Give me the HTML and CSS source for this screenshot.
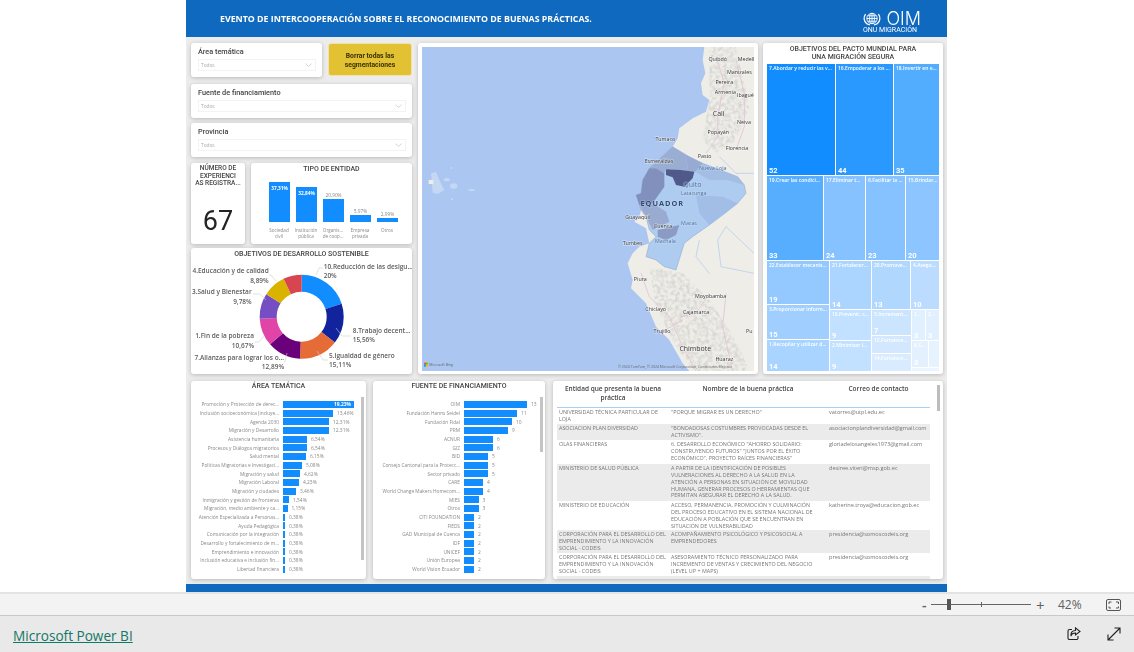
FILE: index.html
```
<!DOCTYPE html>
<html lang="es">
<head>
<meta charset="utf-8">
<title>Evento de intercooperación</title>
<link rel="stylesheet" href="styles.css">
</head>
<body>
<main class="stage">
<section class="report">
  <header class="banner">
    <h1 class="banner-title">EVENTO DE INTERCOOPERACIÓN SOBRE EL RECONOCIMIENTO DE BUENAS PRÁCTICAS.</h1>
    <div class="logo">
      <div class="logo-top">
        <svg class="globe" viewBox="0 0 18 15" fill="none" stroke="#fff" stroke-width=".9">
          <circle cx="9" cy="7.5" r="5.2"/><ellipse cx="9" cy="7.5" rx="2.4" ry="5.2"/><path d="M3.8 7.5h10.4M4.6 4.8h8.8M4.6 10.2h8.8M9 2.3v10.4"/>
          <path stroke-width="1.3" d="M2.6 3.2C.4 6 .6 10 3.6 12.6L7 14M15.400 3.200C17.600 6 17.400 10 14.400 12.600L11 14"/>
        </svg>
        <span class="logo-oim">OIM</span>
      </div>
      <span class="logo-sub">ONU MIGRACIÓN</span>
    </div>
  </header>
  <div class="canvas">
    <div class="top-row">
      <div class="left-col">
        <div class="row-pair">
          <div class="card slicer slicer-short">
            <div class="slicer-title">Área temática</div>
            <div class="dropdown"><span>Todos</span><svg class="chev" viewBox="0 0 8 4"><path d="M.5.500 4 3.500 7.500.500" fill="none" stroke="#bbb" stroke-width=".7"/></svg></div>
          </div>
          <button class="clear-btn">Borrar todas las segmentaciones</button>
        </div>
        <div class="card slicer gap7">
          <div class="slicer-title">Fuente de financiamiento</div>
          <div class="dropdown"><span>Todos</span><svg class="chev" viewBox="0 0 8 4"><path d="M.5.500 4 3.500 7.500.500" fill="none" stroke="#bbb" stroke-width=".7"/></svg></div>
        </div>
        <div class="card slicer gap5">
          <div class="slicer-title">Provincia</div>
          <div class="dropdown"><span>Todos</span><svg class="chev" viewBox="0 0 8 4"><path d="M.5.500 4 3.500 7.500.500" fill="none" stroke="#bbb" stroke-width=".7"/></svg></div>
        </div>
        <div class="row-kpi">
          <div class="card kpi">
            <div class="kpi-title"><span>NÚMERO DE</span><span>EXPERIENCI</span><span>AS REGISTRA...</span></div>
            <div class="kpi-value">67</div>
          </div>
          <div class="card tipo">
            <div class="vis-title">TIPO DE ENTIDAD</div>
            <div class="tipo-bars">
              <div class="tipo-col"><div class="tipo-bar" style="height:40px"><span>37,31%</span></div></div>
              <div class="tipo-col"><div class="tipo-bar" style="height:35px"><span>32,84%</span></div></div>
              <div class="tipo-col"><em>20,90%</em><div class="tipo-bar" style="height:23px"></div></div>
              <div class="tipo-col"><em>5,97%</em><div class="tipo-bar" style="height:7px"></div></div>
              <div class="tipo-col"><em>2,99%</em><div class="tipo-bar" style="height:4px"></div></div>
            </div>
            <div class="tipo-labels">
              <span>Sociedad civil</span><span>Institución pública</span><span>Organis... de coop...</span><span>Empresa privada</span><span>Otros</span>
            </div>
          </div>
        </div>
        <div class="card ods">
          <div class="vis-title">OBJETIVOS DE DESARROLLO SOSTENIBLE</div>
          <svg class="donut" viewBox="0 0 221 126">
            <g fill="none" stroke-width="17" transform="rotate(-90 110.700 68.700)">
              <circle cx="110.700" cy="68.700" r="33.500" pathLength="100" stroke="#118dff" stroke-dasharray="20 80"/>
              <circle cx="110.700" cy="68.700" r="33.500" pathLength="100" stroke="#12239e" stroke-dasharray="15.560 84.440" stroke-dashoffset="-20"/>
              <circle cx="110.700" cy="68.700" r="33.500" pathLength="100" stroke="#e66c37" stroke-dasharray="15.110 84.890" stroke-dashoffset="-35.560"/>
              <circle cx="110.700" cy="68.700" r="33.500" pathLength="100" stroke="#6b007b" stroke-dasharray="12.890 87.110" stroke-dashoffset="-50.670"/>
              <circle cx="110.700" cy="68.700" r="33.500" pathLength="100" stroke="#e044a7" stroke-dasharray="10.670 89.330" stroke-dashoffset="-63.560"/>
              <circle cx="110.700" cy="68.700" r="33.500" pathLength="100" stroke="#744ec2" stroke-dasharray="9.780 90.220" stroke-dashoffset="-74.230"/>
              <circle cx="110.700" cy="68.700" r="33.500" pathLength="100" stroke="#d9b300" stroke-dasharray="8.890 91.110" stroke-dashoffset="-84.010"/>
              <circle cx="110.700" cy="68.700" r="33.500" pathLength="100" stroke="#d64550" stroke-dasharray="7.100 92.900" stroke-dashoffset="-92.900"/>
            </g>
            <g fill="none" stroke="#ccc" stroke-width=".6">
              <path d="M125 27 l3-7h4M145 80l6 8h9M126 103l6 9h5M96 105l-2 9h-1M73 88l-5 6h-4M75 52l-6-6h-7M85 33l-5-6h-2"/>
            </g>
            <g class="donut-label">
              <text x="132.700" y="20.500">10.Reducción de las desigu...</text><text x="132.700" y="29.500">20%</text>
              <text x="161.700" y="85">8.Trabajo decent...</text><text x="161.700" y="94">15,56%</text>
              <text x="138" y="110">5.Igualdad de género</text><text x="138" y="119">15,11%</text>
            </g>
            <g class="donut-label end">
              <text x="93" y="112">7.Allanzas para lograr los o...</text><text x="93" y="121">12,89%</text>
              <text x="63" y="90">1.Fin de la pobreza</text><text x="63" y="100">10,67%</text>
              <text x="60.700" y="46">3.Salud y Bienestar</text><text x="60.700" y="56">9,78%</text>
              <text x="77.700" y="25">4.Educación y de calidad</text><text x="77.700" y="35">8,89%</text>
            </g>
          </svg>
        </div>
      </div>

      <div class="card map-card">
        <svg class="map" viewBox="18 21 996 972">
          <defs>
            <filter id="terrain" x="0" y="0" width="100%" height="100%">
              <feTurbulence type="fractalNoise" baseFrequency=".09" numOctaves="3" seed="4"/>
              <feColorMatrix values="0 0 0 0 .68  0 0 0 0 .68  0 0 0 0 .65  2.600 0 0 0 -.95"/>
              <feComposite in2="SourceAlpha" operator="in"/>
            </filter>
          </defs>
          <rect x="18" y="21" width="996" height="972" fill="#abc6f0"/>
          <path fill="#eeede8" d="M865 21 860 60 868 100 855 130 860 165 880 180 870 215 830 235 790 265 785 295 770 320 700 385 680 420 675 460 660 465 675 510 670 530 655 545 690 565 700 610 670 620 650 640 635 670 650 720 645 745 690 790 720 860 760 900 800 970 820 993H1014V21Z"/>
          <g filter="url(#terrain)">
            <path d="M880 21H960L1000 200 960 300 900 340 860 300 880 180Z"/>
            <path d="M700 680 800 700 880 780 960 900 1000 993H830L770 900 720 800Z"/>
          </g>
          <path fill="none" stroke="#e3c2d6" stroke-width="2.500" d="M900 50 925 130 905 230 905 290 870 340M960 60 985 160 985 260 960 330M675 700 700 770 760 830 800 920 840 993M880 760 840 820 790 830M730 880 800 840M930 760 920 860 950 993"/>
          <path fill="none" stroke="#a9c9ee" stroke-width="2" d="M1014 400 960 400 910 350M1014 640 930 560 905 600 915 680 1014 700M850 600 840 650 880 700"/>
          <g fill="#c4d8f4">
            <path d="M45 400 60 395 70 420 85 450 65 462 50 458 48 435Z"/>
            <ellipse cx="113" cy="438" rx="11" ry="8"/><ellipse cx="92" cy="419" rx="9" ry="5"/><ellipse cx="167" cy="450" rx="10" ry="3"/>
            <circle cx="106" cy="384" r="3"/><circle cx="108" cy="477" r="3"/><rect x="38" y="420" width="14" height="12" fill="#eeede8"/>
          </g>
          <path fill="#aecbf0" stroke="#6d8ab5" stroke-width="1" d="M770 320 820 350 860 370 900 385 965 410 985 435 990 460 965 490 920 525 880 555 830 590 805 610 780 690 745 680 720 660 690 650 700 610 720 590 700 570 690 530 675 510 660 465 675 460 680 420 700 385Z"/>
          <path fill="#9aaed4" d="M770 320 810 345 815 385 795 390 750 388 745 400 720 385 700 385Z"/>
          <path fill="#97abd2" d="M810 345 860 370 838 395 795 390 815 385Z"/>
          <path fill="#a3bde4" d="M860 370 900 385 965 410 985 435 935 420 880 420 838 395Z"/>
          <path fill="#8290bd" d="M680 420 700 385 720 385 745 400 745 440 710 490 670 495 660 465 675 460Z"/>
          <path fill="#9aabd2" d="M670 495 710 490 750 515 760 545 710 570 690 530Z"/>
          <path fill="#8b9bc3" d="M725 570 790 555 780 585 750 600 725 590Z"/>
          <path fill="#a3bee6" d="M840 465 920 470 965 490 920 525 880 555 850 520Z"/>
          <path fill="#4f5a8a" d="M750 388 795 390 835 395 830 415 805 440 780 435 770 412 750 405Z"/>
          <g class="map-text">
            <text x="905" y="64">Quibdó</text><text x="990" y="64">Medell</text><text x="970" y="102">Manizales</text><text x="925" y="131">Pereira</text><text x="928" y="161">Armenia</text><text x="988" y="172">Ibagué</text>
            <text class="big" x="908" y="227">Cali</text><text x="984" y="253">Neiva</text><text x="907" y="282">Popayán</text><text x="748" y="304">Tumaco</text><text x="963" y="330">Florencia</text><text x="866" y="353">Pasto</text>
            <text x="729" y="368">Esmeraldas</text><text class="blue" x="890" y="390">Nueva Loja</text><text class="blue big" x="829" y="441">Quito</text><text class="blue" x="833" y="464">Latacunga</text>
            <text class="country" x="739" y="499">EQUADOR</text><text x="665" y="537">Guayaquil</text><text x="741" y="563">Cuenca</text><text class="blue" x="819" y="555">Macas</text><text class="blue" x="748" y="610">Machala</text><text x="650" y="614">Tumbes</text>
            <text x="673" y="722">Piura</text><text x="884" y="773">Moyobamba</text><text x="719" y="813">Chiclayo</text><text x="840" y="823">Cajamarca</text><text x="738" y="878">Trujillo</text><text class="big" x="838" y="934">Chimbote</text><text x="925" y="962">Huaraz</text><text x="1000" y="878">Pu</text>
          </g>
          <rect x="24" y="968" width="6" height="6" fill="#f25022"/><rect x="30" y="968" width="6" height="6" fill="#7fba00"/><rect x="24" y="974" width="6" height="6" fill="#00a4ef"/><rect x="30" y="974" width="6" height="6" fill="#ffb900"/>
          <text class="map-fine" x="40" y="979">Microsoft Bing</text>
          <text class="map-fine" x="606" y="983">© 2024 TomTom, © 2024 Microsoft Corporation, Condiciones  Mejoras</text>
        </svg>
      </div>

      <div class="card treemap-card">
        <div class="vis-title tm-title">OBJETIVOS DEL PACTO MUNDIAL PARA UNA MIGRACIÓN SEGURA</div>
        <div class="tm">
          <div class="tm-row" style="height:111px">
            <div class="tm-cell" style="width:68px;background:#118dff"><span>7.Abordar y reducir las v...</span><b>52</b></div>
            <div class="tm-cell" style="width:57px;background:#2a99ff"><span>16.Empoderar a los ...</span><b>44</b></div>
            <div class="tm-cell" style="width:45px;background:#53adff"><span>18.Invertir en e...</span><b>35</b></div>
          </div>
          <div class="tm-row" style="height:84px">
            <div class="tm-cell" style="width:56px;background:#57aeff"><span>19.Crear las condici...</span><b>33</b></div>
            <div class="tm-cell" style="width:41px;background:#85c2ff"><span>17.Eliminar t...</span><b>24</b></div>
            <div class="tm-cell" style="width:39px;background:#85c2ff"><span>6.Facilitar la ...</span><b>23</b></div>
            <div class="tm-cell" style="width:33px;background:#8cc5ff"><span>15.Brindar...</span><b>20</b></div>
          </div>
          <div class="tm-row" style="height:110px">
            <div class="tm-col" style="width:62px">
              <div class="tm-cell" style="height:43px;background:#93c9ff"><span>22.Establecer mecanis...</span><b>19</b></div>
              <div class="tm-cell" style="height:34px;background:#a0cfff"><span>3.Proporcionar inform...</span><b>15</b></div>
              <div class="tm-cell" style="height:31px;background:#a8d4ff"><span>1.Recopilar y utilizar d...</span><b>14</b></div>
            </div>
            <div class="tm-col" style="width:109px">
              <div class="tm-row" style="height:48px">
                <div class="tm-cell" style="width:41px;background:#abd5ff"><span>21.Fortalecer...</span><b>14</b></div>
                <div class="tm-cell" style="width:38px;background:#b0d8ff"><span>20.Promove...</span><b>13</b></div>
                <div class="tm-cell" style="width:28px;background:#bcdcff"><span>4.Asegu...</span><b>10</b></div>
              </div>
              <div class="tm-row" style="height:61px">
                <div class="tm-col" style="width:41px">
                  <div class="tm-cell" style="height:30px;background:#c2e0ff"><span>10.Prevenir, c...</span><b>9</b></div>
                  <div class="tm-cell" style="height:30px;background:#c2e0ff"><span>2.Minimizar l...</span><b>9</b></div>
                </div>
                <div class="tm-col" style="width:39px">
                  <div class="tm-cell" style="height:25px;background:#cce5ff"><span>5.Increment...</span><b>7</b></div>
                  <div class="tm-cell" style="height:17px;background:#d3e8ff"><span>12.Fortalece...</span></div>
                  <div class="tm-cell" style="height:17px;background:#d8ebff"><span>14.Fortalece...</span></div>
                </div>
                <div class="tm-col" style="width:27px">
                  <div class="tm-row" style="height:30px">
                    <div class="tm-cell" style="width:13px;background:#e0f0ff"><span>1...</span><b>3</b></div>
                    <div class="tm-cell" style="width:13px;background:#e0f0ff"><span>2...</span><b>3</b></div>
                  </div>
                  <div class="tm-row" style="height:26px">
                    <div class="tm-cell" style="width:16px;background:#e3f1ff"><span>8.S...</span><b>3</b></div>
                    <div class="tm-cell" style="width:10px;background:#e6f3ff"></div>
                  </div>
                  <div class="tm-cell" style="height:3px;background:#ebf5ff"></div>
                </div>
              </div>
            </div>
          </div>
        </div>
      </div>
    </div>

    <div class="bottom-row">
      <div class="card hbars area">
        <div class="vis-title">ÁREA TEMÁTICA</div>
        <div class="hb-list">
          <div class="hb"><span class="hb-l">Promoción y Protección de derec...</span><i class="hb-b" style="width:71px"><u>19,23%</u></i></div>
          <div class="hb"><span class="hb-l">Inclusión socioeconómica (incluye...</span><i class="hb-b" style="width:50px"></i><span class="hb-v">13,46%</span></div>
          <div class="hb"><span class="hb-l">Agenda 2030</span><i class="hb-b" style="width:46px"></i><span class="hb-v">12,31%</span></div>
          <div class="hb"><span class="hb-l">Migración y Desarrollo</span><i class="hb-b" style="width:46px"></i><span class="hb-v">12,31%</span></div>
          <div class="hb"><span class="hb-l">Asistencia humanitaria</span><i class="hb-b" style="width:24px"></i><span class="hb-v">6,54%</span></div>
          <div class="hb"><span class="hb-l">Procesos y Diálogos migratorios</span><i class="hb-b" style="width:24px"></i><span class="hb-v">6,54%</span></div>
          <div class="hb"><span class="hb-l">Salud mental</span><i class="hb-b" style="width:23px"></i><span class="hb-v">6,15%</span></div>
          <div class="hb"><span class="hb-l">Políticas Migratorias e Investigaci...</span><i class="hb-b" style="width:19px"></i><span class="hb-v">5,08%</span></div>
          <div class="hb"><span class="hb-l">Migración y salud</span><i class="hb-b" style="width:17px"></i><span class="hb-v">4,62%</span></div>
          <div class="hb"><span class="hb-l">Migración Laboral</span><i class="hb-b" style="width:16px"></i><span class="hb-v">4,23%</span></div>
          <div class="hb"><span class="hb-l">Migración y ciudades</span><i class="hb-b" style="width:13px"></i><span class="hb-v">3,46%</span></div>
          <div class="hb"><span class="hb-l">Inmigración y gestión de fronteras</span><i class="hb-b" style="width:6px"></i><span class="hb-v">1,54%</span></div>
          <div class="hb"><span class="hb-l">Migración, medio ambiente y ca...</span><i class="hb-b" style="width:4.500px"></i><span class="hb-v">1,15%</span></div>
          <div class="hb"><span class="hb-l">Atención Especializada a Personas...</span><i class="hb-b" style="width:2px"></i><span class="hb-v">0,38%</span></div>
          <div class="hb"><span class="hb-l">Ayuda Pedagógica</span><i class="hb-b" style="width:2px"></i><span class="hb-v">0,38%</span></div>
          <div class="hb"><span class="hb-l">Comunicación por la integración</span><i class="hb-b" style="width:2px"></i><span class="hb-v">0,38%</span></div>
          <div class="hb"><span class="hb-l">Desarrollo y fortalecimiento de m...</span><i class="hb-b" style="width:2px"></i><span class="hb-v">0,38%</span></div>
          <div class="hb"><span class="hb-l">Emprendimiento e innovación</span><i class="hb-b" style="width:2px"></i><span class="hb-v">0,38%</span></div>
          <div class="hb"><span class="hb-l">Inclusión educativa e inclusión fin...</span><i class="hb-b" style="width:2px"></i><span class="hb-v">0,38%</span></div>
          <div class="hb"><span class="hb-l">Libertad financiera</span><i class="hb-b" style="width:2px"></i><span class="hb-v">0,38%</span></div>
        </div>
        <div class="scroll scroll-area"></div>
      </div>

      <div class="card hbars fuente">
        <div class="vis-title">FUENTE DE FINANCIAMIENTO</div>
        <div class="hb-list">
          <div class="hb"><span class="hb-l">OIM</span><i class="hb-b" style="width:63px"></i><span class="hb-v">13</span></div>
          <div class="hb"><span class="hb-l">Fundación Hanns Seidel</span><i class="hb-b" style="width:53px"></i><span class="hb-v">11</span></div>
          <div class="hb"><span class="hb-l">Fundación Fidal</span><i class="hb-b" style="width:48px"></i><span class="hb-v">10</span></div>
          <div class="hb"><span class="hb-l">PRM</span><i class="hb-b" style="width:44px"></i><span class="hb-v">9</span></div>
          <div class="hb"><span class="hb-l">ACNUR</span><i class="hb-b" style="width:29px"></i><span class="hb-v">6</span></div>
          <div class="hb"><span class="hb-l">GIZ</span><i class="hb-b" style="width:29px"></i><span class="hb-v">6</span></div>
          <div class="hb"><span class="hb-l">BID</span><i class="hb-b" style="width:24px"></i><span class="hb-v">5</span></div>
          <div class="hb"><span class="hb-l">Consejo Cantonal para la Protecc...</span><i class="hb-b" style="width:24px"></i><span class="hb-v">5</span></div>
          <div class="hb"><span class="hb-l">Sector privado</span><i class="hb-b" style="width:24px"></i><span class="hb-v">5</span></div>
          <div class="hb"><span class="hb-l">CARE</span><i class="hb-b" style="width:19px"></i><span class="hb-v">4</span></div>
          <div class="hb"><span class="hb-l">World Change Makers Homecom...</span><i class="hb-b" style="width:19px"></i><span class="hb-v">4</span></div>
          <div class="hb"><span class="hb-l">MIES</span><i class="hb-b" style="width:14.500px"></i><span class="hb-v">3</span></div>
          <div class="hb"><span class="hb-l">Otros</span><i class="hb-b" style="width:14.500px"></i><span class="hb-v">3</span></div>
          <div class="hb"><span class="hb-l">CITI FOUNDATION</span><i class="hb-b" style="width:10px"></i><span class="hb-v">2</span></div>
          <div class="hb"><span class="hb-l">FIEDS</span><i class="hb-b" style="width:10px"></i><span class="hb-v">2</span></div>
          <div class="hb"><span class="hb-l">GAD Municipal de Cuenca</span><i class="hb-b" style="width:10px"></i><span class="hb-v">2</span></div>
          <div class="hb"><span class="hb-l">IDF</span><i class="hb-b" style="width:10px"></i><span class="hb-v">2</span></div>
          <div class="hb"><span class="hb-l">UNICEF</span><i class="hb-b" style="width:10px"></i><span class="hb-v">2</span></div>
          <div class="hb"><span class="hb-l">Unión Europea</span><i class="hb-b" style="width:10px"></i><span class="hb-v">2</span></div>
          <div class="hb"><span class="hb-l">World Vision Ecuador</span><i class="hb-b" style="width:10px"></i><span class="hb-v">2</span></div>
        </div>
        <div class="scroll scroll-fuente"></div>
      </div>

      <div class="card table-card">
        <div class="t-head">
          <div>Entidad que presenta la buena práctica</div>
          <div>Nombre de la buena práctica</div>
          <div>Correo de contacto</div>
        </div>
        <div class="t-body">
          <div class="t-row h16"><div>UNIVERSIDAD TÉCNICA PARTICULAR DE LOJA</div><div>"PORQUE MIGRAR ES UN DERECHO"</div><div>vatorres@utpl.edu.ec</div></div>
          <div class="t-row h16 alt"><div>ASOCIACION PLAN DIVERSIDAD</div><div>"BONDADOSAS COSTUMBRES PROVOCADAS DESDE EL ACTIVISMO".</div><div>asociacionplandiversidad@gmail.com</div></div>
          <div class="t-row h24"><div>OLAS FINANCIERAS</div><div>6. DESARROLLO ECONÓMICO "AHORRO SOLIDARIO: CONSTRUYENDO FUTUROS" "JUNTOS POR EL ÉXITO ECONÓMICO", PROYECTO RAÍCES FINANCIERAS"</div><div>gloriadelosangeles1973@gmail.com</div></div>
          <div class="t-row h37 alt"><div>MINISTERIO DE SALUD PÚBLICA</div><div>A PARTIR DE LA IDENTIFICACIÓN DE POSIBLES VULNERACIONES AL DERECHO A LA SALUD EN LA ATENCIÓN A PERSONAS EN SITUACIÓN DE MOVILIDAD HUMANA, GENERAR PROCESOS O HERRAMIENTAS QUE PERMITAN ASEGURAR EL DERECHO A LA SALUD.</div><div>desiree.viteri@msp.gob.ec</div></div>
          <div class="t-row h30"><div>MINISTERIO DE EDUCACIÓN</div><div>ACCESO, PERMANENCIA, PROMOCIÓN Y CULMINACIÓN DEL PROCESO EDUCATIVO EN EL SISTEMA NACIONAL DE EDUCACIÓN A POBLACIÓN QUE SE ENCUENTRAN EN SITUACIÓN DE VULNERABILIDAD</div><div>katherine.troya@educacion.gob.ec</div></div>
          <div class="t-row h23 alt"><div>CORPORACIÓN PARA EL DESARROLLO DEL EMPRENDIMIENTO Y LA INNOVACIÓN SOCIAL - CODEIS</div><div>ACOMPAÑAMIENTO PSICOLÓGICO Y PSICOSOCIAL A EMPRENDEDORES</div><div>presidencia@somoscodeis.org</div></div>
          <div class="t-row h23"><div>CORPORACIÓN PARA EL DESARROLLO DEL EMPRENDIMIENTO Y LA INNOVACIÓN SOCIAL - CODEIS</div><div>ASESORAMIENTO TÉCNICO PERSONALIZADO PARA INCREMENTO DE VENTAS Y CRECIMIENTO DEL NEGOCIO (LEVEL UP + MAPS)</div><div>presidencia@somoscodeis.org</div></div>
          <div class="t-row h5 alt"></div>
        </div>
        <div class="scroll scroll-table"></div>
      </div>
    </div>
  </div>
  <div class="bottom-bar"></div>
</section>
</main>

<div class="zoombar">
  <span class="z-minus">-</span>
  <div class="z-track"><i class="z-tick"></i><i class="z-thumb"></i></div>
  <span class="z-plus">+</span>
  <span class="z-pct">42%</span>
  <svg class="z-fit" viewBox="0 0 15 12" fill="none" stroke="#555"><rect x=".5" y=".5" width="14" height="11" rx="1.500"/><path d="M3 5V3h2.500M10 3h2.500v2M12.500 7.500V9H10M5 9H3V7.500"/></svg>
</div>
<footer class="footer">
  <a class="pbi-link" href="#">Microsoft Power BI</a>
  <div class="foot-icons">
    <svg class="foot-icon" viewBox="0 0 14 14" fill="none" stroke="#222" stroke-width="1.100"><path d="M5 2.500H2.500a1.500 1.500 0 0 0-1.500 1.500v7a1.500 1.500 0 0 0 1.500 1.500h7a1.500 1.500 0 0 0 1.500-1.500V9"/><path d="M8.500.800 13 4.500 8.500 8V6C6 6 4.500 7 4 9c-.4-3.500 1.500-5.500 4.500-5.500Z"/></svg>
    <svg class="foot-icon" viewBox="0 0 14 14" fill="none" stroke="#222" stroke-width="1.100"><path d="M1 13 13 1M7.500 1H13v5.500M1 7.500V13h5.500"/></svg>
  </div>
</footer>
</body>
</html>
```
FILE: styles.css
```
* { box-sizing: border-box; }
html, body { margin: 0; padding: 0; }
body {
  width: 1134px;
  height: 652px;
  overflow: hidden;
  background: #fff;
  font-family: "Open Sans", "Liberation Sans", sans-serif;
  display: flex;
  flex-direction: column;
}
.stage { height: 592px; padding-left: 186px; background: #fff; flex: none; }
.report { width: 761px; height: 592px; display: flex; flex-direction: column; background: #ececec; }

.banner { height: 37px; flex: none; background: #0f69bf; display: flex; align-items: center; justify-content: space-between; padding: 0 26px 0 34px; color: #fff; }
.banner-title { margin: 1px 0 0; font-size: 8.800px; font-weight: 700; font-family: "Open Sans", sans-serif; filter: blur(.3px); white-space: nowrap; }
.logo { width: 58px; display: flex; flex-direction: column; align-items: stretch; margin-top: 7px; filter: blur(.2px); }
.logo-top { display: flex; align-items: center; justify-content: space-between; height: 15px; }
.globe { width: 20px; height: 15px; margin-left: -1px; }
.logo-oim { font-family: "Inter", sans-serif; font-weight: 300; font-size: 18px; line-height: 15px; }
.logo-sub { font-size: 7px; line-height: 7px; margin-top: 1px; font-family: "Roboto", sans-serif; white-space: nowrap; }

.canvas { flex: 1; padding: 6px 4px 5px 5px; display: flex; flex-direction: column; filter: blur(.32px); }
.top-row { display: flex; height: 331px; flex: none; }
.left-col { width: 221px; flex: none; display: flex; flex-direction: column; }
.card { background: #fff; border-radius: 3px; box-shadow: 0 1px 4px rgba(0,0,0,.22); position: relative; }
.vis-title { font-family: "Roboto", sans-serif; font-weight: 500; font-size: 7px; line-height: 8px; color: #444; text-align: center; padding-top: 2px; }

.row-pair { display: flex; height: 34px; flex: none; gap: 6px; }
.slicer { height: 34px; flex: none; padding: 4px 6px 0 7px; }
.slicer-short { width: 131px; }
.gap7 { margin-top: 7px; }
.gap5 { margin-top: 5px; }
.slicer-title { font-family: "Roboto", sans-serif; font-weight: 500; font-size: 7.300px; line-height: 9px; color: #444; }
.dropdown { height: 12px; margin-top: 3px; border: 1px solid #f3f3f3; display: flex; align-items: center; justify-content: space-between; padding: 0 3px 0 2px; font-size: 4.800px; color: #aaa; }
.chev { width: 7px; height: 4px; }
.clear-btn { width: 84px; height: 33px; margin: 0; border: 1px solid #f1e2a6; border-radius: 3px; background: #e2c233; font-family: "Roboto", sans-serif; font-weight: 700; font-size: 6.800px; line-height: 9px; color: #3a3205; padding: 3px 6px 0; }

.row-kpi { display: flex; gap: 6px; height: 81px; margin-top: 6px; flex: none; }
.kpi { width: 54px; flex: none; display: flex; flex-direction: column; align-items: center; }
.kpi-title { font-family: "Roboto", sans-serif; font-weight: 500; font-size: 6.500px; line-height: 7.700px; color: #444; text-align: center; height: 38px; margin-top: 2px; white-space: nowrap; }
.kpi-title span { display: block; }
.kpi-value { font-family: "Roboto", sans-serif; font-size: 27px; line-height: 28px; color: #252423; margin-top: 4px; }
.tipo { flex: 1; }
.tipo-bars { display: flex; gap: 6px; padding-left: 18px; height: 49px; align-items: flex-end; margin-top: 0; }
.tipo-col { width: 21px; display: flex; flex-direction: column; align-items: center; }
.tipo-col em { font-style: normal; font-size: 4.800px; line-height: 7px; color: #888; white-space: nowrap; }
.tipo-bar { width: 100%; background: #118dff; text-align: center; padding-top: 2px; }
.tipo-bar span { display: block; font-size: 4.800px; font-weight: 700; line-height: 8px; color: #fff; }
.tipo-labels { display: flex; gap: 0; padding-left: 14.500px; margin-top: 5px; }
.tipo-labels span { width: 27px; flex: none; font-size: 4.600px; line-height: 6px; color: #888; text-align: center; padding: 0 2px; }

.ods { height: 126px; margin-top: 4px; flex: none; }
.ods .vis-title { position: absolute; left: 0; right: 0; top: 0; padding-top: 2px; }
.donut { width: 221px; height: 126px; display: block; }
.donut-label text { font-family: "Open Sans", sans-serif; font-weight: 600; font-size: 6.500px; fill: #5c5c5c; }
.donut-label.end text { text-anchor: end; }

.map-card { width: 340px; flex: none; margin-left: 6px; padding: 4px; }
.map { width: 332px; height: 324px; display: block; }
.map-text text { font-family: "Open Sans", sans-serif; font-size: 16px; fill: #333; text-anchor: middle; paint-order: stroke; stroke: rgba(255,255,255,.6); stroke-width: 2.500px; }
.map-text .big { font-size: 21px; }
.map-text .blue { fill: #4e6f99; stroke: rgba(220,235,250,.4); }
.map-text .country { font-size: 22px; font-weight: 700; letter-spacing: 3px; fill: #324a72; stroke: rgba(220,235,250,.4); }
.map-fine { font-size: 10.500px; fill: #666; font-family: "Open Sans", sans-serif; }

.treemap-card { width: 180px; flex: none; margin-left: 5px; padding: 2px 4px 0; }
.tm-title { padding: 0 20px; height: 19px; font-size: 7px; }
.tm { display: flex; flex-direction: column; gap: 1px; }
.tm-row { display: flex; gap: 1px; flex: none; }
.tm-col { display: flex; flex-direction: column; gap: 1px; flex: none; }
.tm-cell { flex: none; display: flex; flex-direction: column; justify-content: space-between; padding: 1px 1px 0 2px; overflow: hidden; color: #fff; }
.tm-cell span { font-size: 5px; font-weight: 600; line-height: 7px; white-space: nowrap; overflow: hidden; }
.tm-cell b { font-family: "Roboto", sans-serif; font-size: 7.500px; line-height: 8px; font-weight: 700; }

.bottom-row { display: flex; height: 198px; margin-top: 7px; flex: none; }
.hbars { flex: none; }
.area { width: 175px; }
.fuente { width: 172px; margin-left: 7px; }
.hbars .vis-title { height: 19px; padding-top: 1px; }
.hb-list { display: flex; flex-direction: column; }
.hb { height: 8.680px; display: flex; align-items: center; flex: none; }
.hb-l { flex: none; text-align: right; font-size: 4.800px; color: #888; white-space: nowrap; padding-right: 4px; }
.area .hb-l { width: 92px; }
.fuente .hb-l { width: 91px; }
.hb-b { display: block; height: 7px; background: #118dff; flex: none; text-align: right; text-decoration: none; font-style: normal; }
.hb-b u { display: block; text-decoration: none; color: #fff; font-size: 4.900px; font-weight: 700; line-height: 7px; padding-right: 3px; }
.hb-v { font-size: 4.900px; color: #888; margin-left: 4px; white-space: nowrap; }
.scroll { position: absolute; width: 3px; background: #c4c4c4; }
.scroll-area { left: 170px; top: 16px; height: 163px; }
.scroll-fuente { left: 167px; top: 16px; height: 55px; }
.scroll-table { left: 384px; top: 4px; height: 26px; background: #bdbdbd; }

.table-card { width: 390px; margin-left: 8px; flex: none; padding: 0 13px 0 4px; overflow: hidden; }
.t-head { display: grid; grid-template-columns: 112px 158px 103px; height: 27px; border-bottom: 1px solid #a8d0f5; font-weight: 600; font-size: 6.500px; line-height: 8.600px; color: #444; text-align: center; padding-top: 4px; }
.t-head div { padding: 0 7px; }
.t-body { font-size: 5.400px; line-height: 6.850px; color: #777; }
.t-row { display: grid; grid-template-columns: 112px 158px 103px; overflow: hidden; }
.t-row div { padding: 1px 1px 0 2px; }
.t-row div:nth-child(2) { padding-right: 6px; }
.t-row div:nth-child(3) { font-size: 5.600px; white-space: nowrap; }
.t-row.alt { background: #ebebeb; }
.h5 { height: 5px; }
.h16 { height: 16px; }
.h24 { height: 24px; }
.h37 { height: 37px; }
.h30 { height: 29px; }
.h23 { height: 23px; }

.bottom-bar { height: 8px; flex: none; background: #0f69bf; }

.zoombar { height: 24px; flex: none; background: #f3f3f3; border-top: 2px solid #e3e3e3; border-bottom: 1px solid #c8c8c8; display: flex; align-items: center; padding-left: 922px; color: #606060; }
.z-minus { font-size: 14px; font-weight: 600; line-height: 20px; width: 9px; }
.z-track { width: 100px; height: 1px; background: #666; position: relative; }
.z-tick { position: absolute; left: 50px; top: -2px; width: 1px; height: 5px; background: #666; }
.z-thumb { position: absolute; left: 16px; top: -5px; width: 4px; height: 11px; background: #555; }
.z-plus { font-size: 15px; line-height: 20px; margin-left: 5px; width: 22px; }
.z-pct { font-size: 12px; width: 48px; }
.z-fit { width: 15px; height: 12px; }

.footer { flex: 1; background: #e9e9e9; display: flex; align-items: center; justify-content: space-between; padding: 0 13px 0 13px; }
.pbi-link { font-size: 13.600px; color: #117865; text-decoration: underline; line-height: 18px; margin-top: 4px; }
.foot-icons { display: flex; gap: 26px; }
.foot-icon { width: 14px; height: 14px; display: block; }
```
